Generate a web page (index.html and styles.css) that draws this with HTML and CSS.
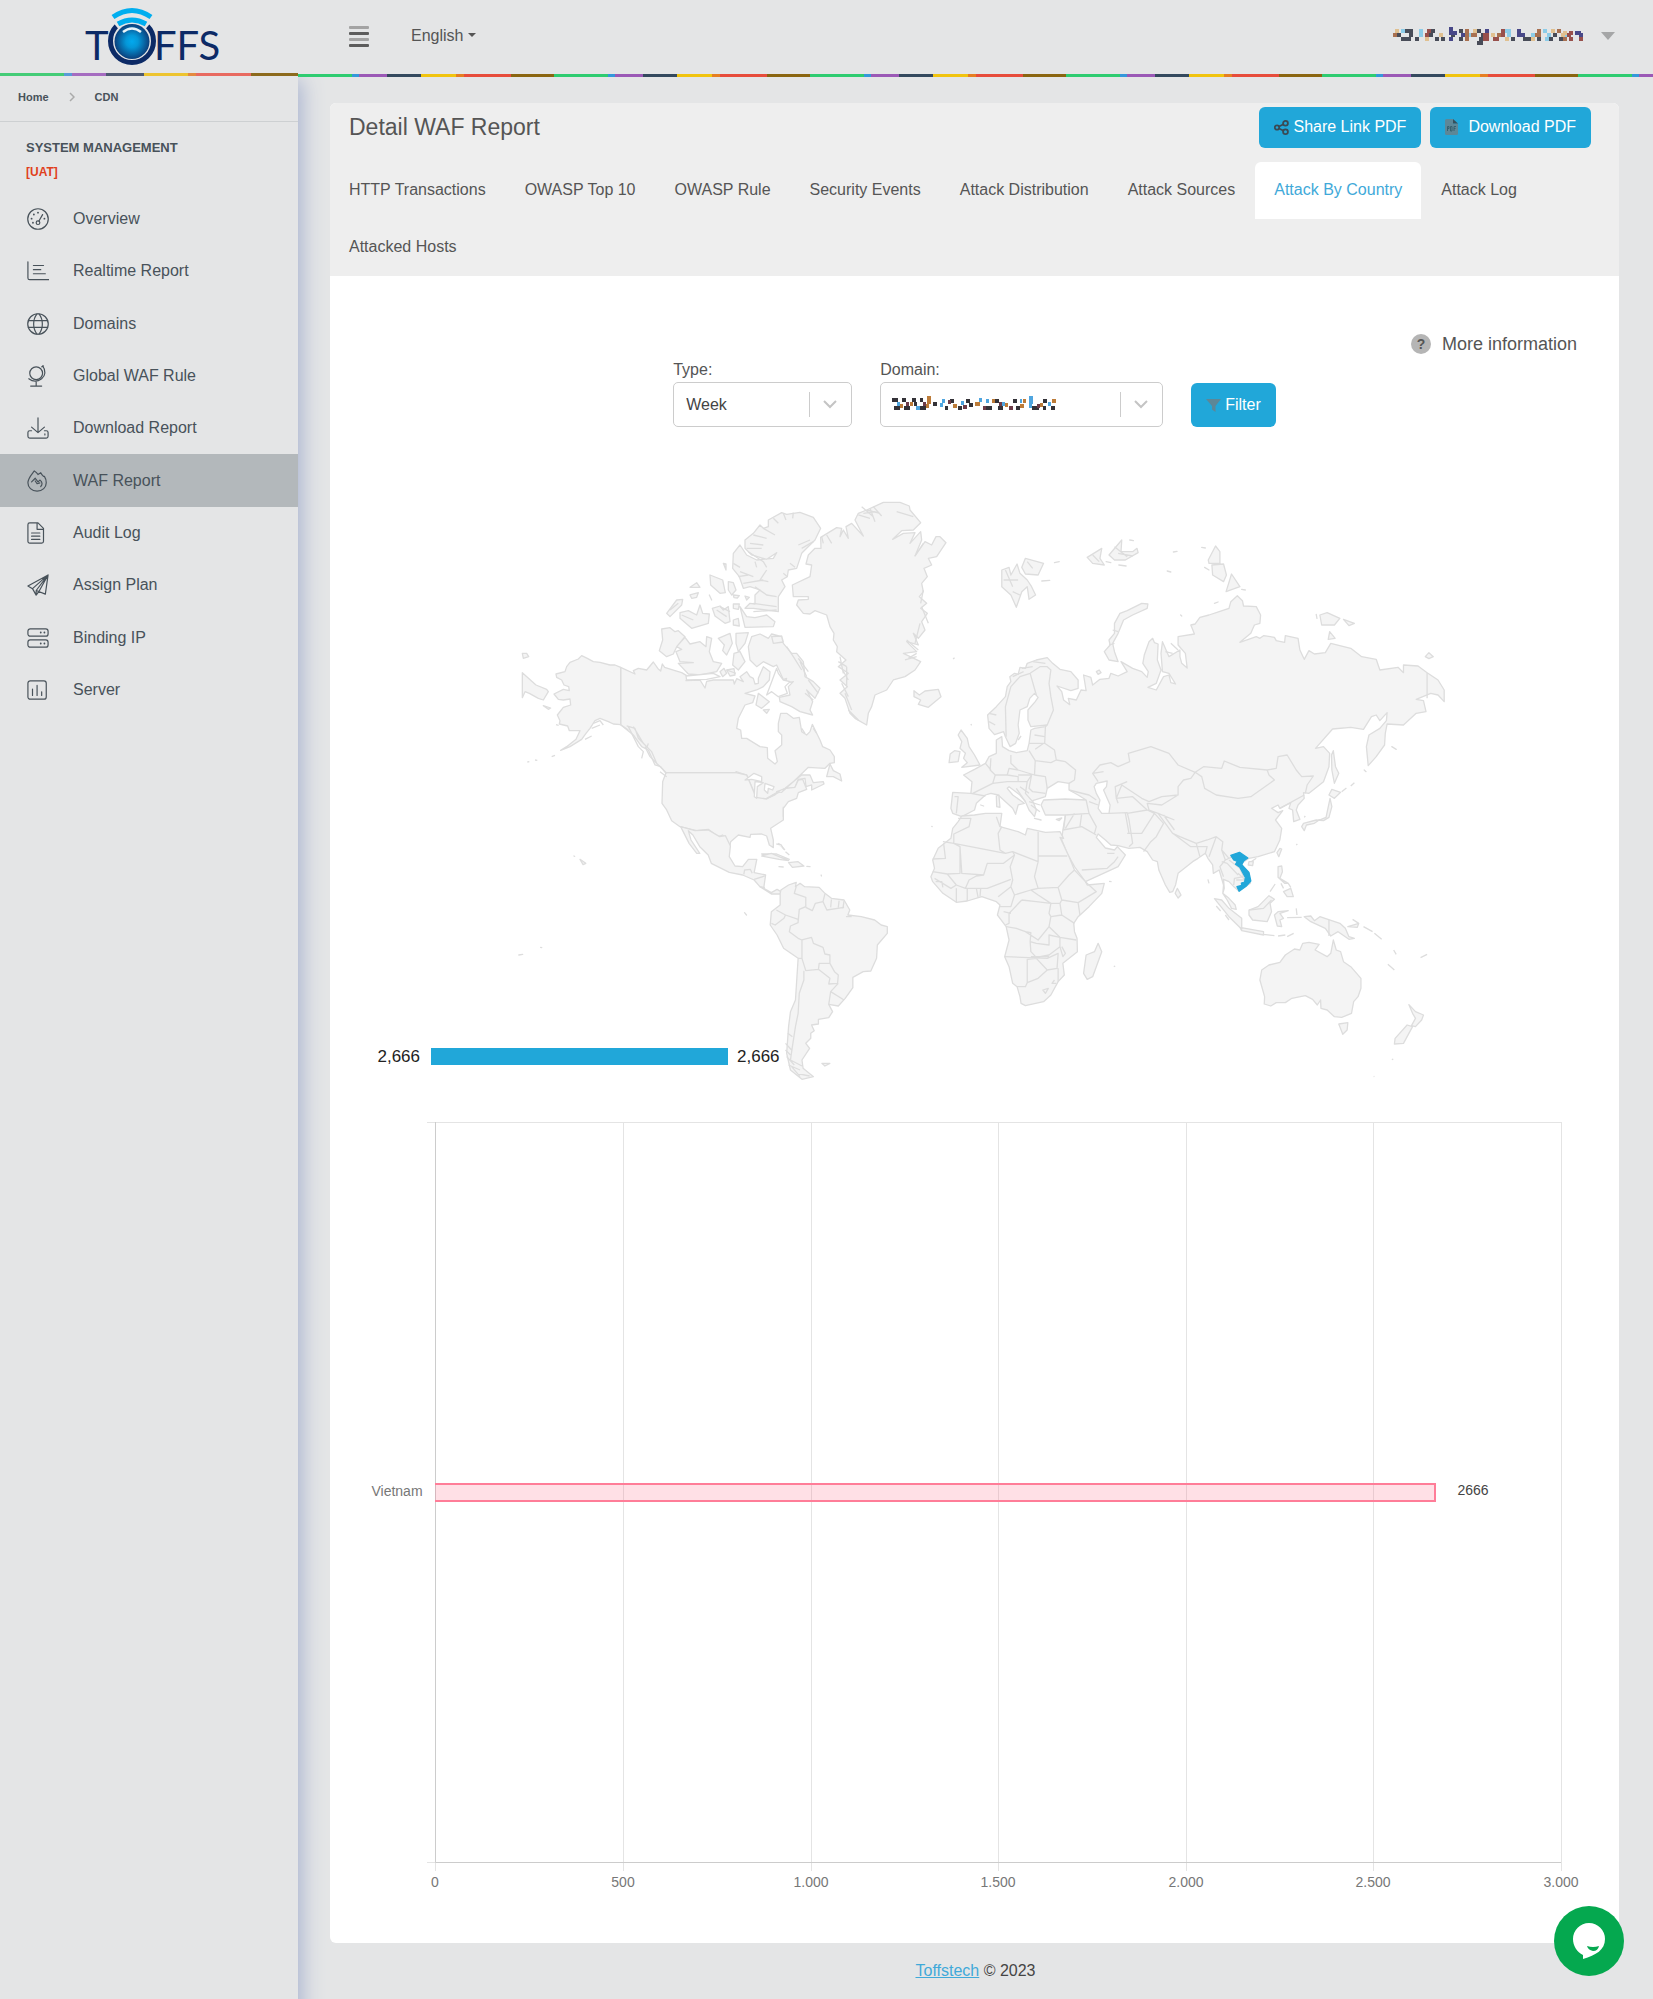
FILE: index.html
```html
<!DOCTYPE html>
<html lang="en">
<head>
<meta charset="utf-8">
<meta name="viewport" content="width=device-width, initial-scale=1">
<title>Detail WAF Report</title>
<link rel="stylesheet" href="styles.css">
</head>
<body>
<div class="layout">
  <aside class="sidebar">
    <a class="logo" href="#" aria-label="TOFFS home">
      <svg width="140" height="62" viewBox="82 4 140 62">
        <defs><radialGradient id="lens"><stop offset="0" stop-color="#02a9ee"/><stop offset=".35" stop-color="#0497d8"/><stop offset="1" stop-color="#0b3f7c"/></radialGradient></defs>
        <circle cx="132" cy="41" r="21.500" fill="none" stroke="#0c2a66" stroke-width="5"/>
        <path d="M116 26Q132 13 148 26" fill="none" stroke="#e4e5e6" stroke-width="8"/>
        <path d="M118 24Q132 16 146 24" fill="none" stroke="#00aeef" stroke-width="5"/>
        <path d="M113 17Q132 4 151 17" fill="none" stroke="#00aeef" stroke-width="5"/>
        <circle cx="132" cy="41.500" r="17.500" fill="url(#lens)"/>
        <path d="M123 32Q132 25 141 32" fill="none" stroke="#e8f4fa" stroke-width="2.500"/>
        <g class="logo-text"><text x="85" y="60">T</text><text x="154" y="60">FFS</text></g>
      </svg>
    </a>
    <div class="stripe stripe-side"></div>
    <nav class="crumbs" aria-label="Breadcrumb"><a href="#">Home</a><svg width="6" height="10" viewBox="0 0 6 10"><path d="M1 1l4 4-4 4" fill="none" stroke="#aaa" stroke-width="1.500"/></svg><a href="#">CDN</a></nav>
    <div class="side-title">SYSTEM MANAGEMENT</div>
    <div class="side-env">[UAT]</div>
    <nav class="menu">
      <a href="#"><svg viewBox="0 0 24 24"><circle cx="12" cy="12" r="11.200"/><circle cx="12" cy="16" r="2"/><path d="M13 14.200l4-7"/><path class="dots" d="M12 5v.1M7.500 7v.1M5 11.500v.1M19 11.500v.1M6.500 16v.1"/></svg>Overview</a>
      <a href="#"><svg viewBox="0 0 24 24"><path d="M1 2v17.500a2 2 0 0 0 2 2h21M7 6h11M7 10.500h8M7 15h13"/></svg>Realtime Report</a>
      <a href="#"><svg viewBox="0 0 24 24"><circle cx="12" cy="12" r="11.200"/><path d="M1.500 8.300h21M1.500 15.700h21M11 1c-5 6-5 16 0 22M13 1c5 6 5 16 0 22"/></svg>Domains</a>
      <a href="#"><svg viewBox="0 0 24 24"><circle cx="10" cy="9" r="7"/><path d="M17 1c4 5 3 11-1 14s-9 4-14 0M10 18v5M4 23h12M16 2l2-1"/></svg>Global WAF Rule</a>
      <a href="#"><svg viewBox="0 0 24 24"><path d="M12 1v16M5 11l7 6 7-6M5 15H3a2 2 0 0 0-2 2v4a2 2 0 0 0 2 2h18a2 2 0 0 0 2-2v-4a2 2 0 0 0-2-2h-2M19.500 18.500v1"/></svg>Download Report</a>
      <a class="active" href="#" aria-current="page"><svg viewBox="0 0 24 24"><path d="M8 1c2 1 3 2 4 4l3-2c1 2 2 3 3 4l1 0c2 3 2 5 2 7 0 5-4 9-10 9S1 19 1 14C1 9 5 5 8 1z"/><path d="M5 13l4-4 3 4 2-2c3 2 3 5 1 7M9 12l2 3 3-1"/></svg>WAF Report</a>
      <a href="#"><svg viewBox="0 0 24 24"><path d="M1 3a2 2 0 0 1 2-2h9l6 6v14a2 2 0 0 1-2 2H3a2 2 0 0 1-2-2zM11 1v7h7M5 12h9M5 15.500h9M5 19h9"/></svg>Audit Log</a>
      <a href="#"><svg viewBox="0 0 24 24"><path d="M23 1L1 13l5 3zM23 1L6 16l4 7 3-4zM23 1L10 18l10 4zM10 18v5"/></svg>Assign Plan</a>
      <a href="#"><svg viewBox="0 0 24 24"><rect x="1" y="2" width="22" height="8" rx="2.500"/><rect x="1" y="14" width="22" height="8" rx="2.500"/><path class="dots" d="M15 6v.1M19 6v.1M15 18v.1M19 18v.1"/></svg>Binding IP</a>
      <a href="#"><svg viewBox="0 0 24 24"><rect x="1" y="2" width="20" height="20" rx="2.500"/><path d="M6 11v7M11 7v11M16 14v4"/></svg>Server</a>
    </nav>
  </aside>

  <div class="page">
    <header class="topbar">
      <button class="burger" type="button" aria-label="Toggle menu"><i></i><i></i><i></i><i></i></button>
      <button class="lang" type="button">English<span class="caret"></span></button>
      <button class="user" type="button" aria-label="Account">
        <svg width="190" height="20" viewBox="0 0 190 20" fill="none" stroke-width="4">
          <path stroke="#484c58" d="M4 9h4M8 13h4M12 5h8M16 9h4M12 13h6M22 13h4M38 5h4M42 13h4M36 9h4M58 9h4M48 13h4M66 5h4M66 13h4M84 5h4M88 9h4M84 17h6M86 13h4M118 13h4M130 13h8M126 9h4M144 13h4M156 13h4M160 9h4M166 13h4"/>
          <path stroke="#8ccce8" d="M8 5h4M26 5h4M26 9h4M74 9h4M112 5h6M114 9h4M138 9h4M150 5h4M154 9h4M152 13h4M172 9h4"/>
          <path stroke="#a87050" d="M0 9h4M72 5h4M72 9h4M72 13h4M78 9h6M104 9h4M142 9h6M144 5h4M164 5h4M170 13h4"/>
          <path stroke="#484888" d="M56 3h4M56 7h8M56 13h4M68 9h4M92 5h4M124 5h4M124 9h8M186 9h4M182 7h6"/>
          <path stroke="#98504c" d="M32 9h4M34 5h4M90 9h6M90 13h6M100 13h6M108 5h4M108 9h4M174 9h4M176 13h4M176 7h4M186 13h4"/>
          <path stroke="#e0c090" d="M2 5h4M32 13h4M46 9h4M80 5h4M98 9h4M112 13h4M138 13h4M158 5h4M168 9h4M170 7h4"/>
        </svg>
        <span class="caret big"></span>
      </button>
    </header>
    <div class="stripe stripe-main"></div>

    <main class="card">
      <div class="card-head">
        <div class="title-row">
          <h1>Detail WAF Report</h1>
          <button class="btn" type="button"><svg width="15" height="15" viewBox="0 0 15 15" fill="none" stroke="#3a4a54" stroke-width="1.800"><circle cx="3" cy="7.500" r="2.200"/><circle cx="11.500" cy="3.300" r="2.400"/><circle cx="11.500" cy="11.700" r="2.400"/><path d="M5 6.500l4.500-2.200M5 8.500l4.500 2.200"/></svg>Share Link PDF</button>
          <button class="btn wide" type="button"><svg width="13" height="16" viewBox="0 0 13 16"><path d="M0 1.500A1.500 1.500 0 0 1 1.500 0H8v4.500h5v10a1.500 1.500 0 0 1-1.500 1.500h-10A1.500 1.500 0 0 1 0 14.500z" fill="#5d8797"/><path d="M8 0l5 4.500H8z" fill="#36505c"/><path d="M2.500 12V7.500H4V9.500H2.500M5.500 7.500v4.500H7V7.500zM9 12V7.500h2M9 9.500h1.500" fill="none" stroke="#36606f"/></svg>Download PDF</button>
        </div>
        <nav class="tabs">
          <a href="#">HTTP Transactions</a><a href="#">OWASP Top 10</a><a href="#">OWASP Rule</a><a href="#">Security Events</a><a href="#">Attack Distribution</a><a href="#">Attack Sources</a><a class="active" href="#" aria-current="page">Attack By Country</a><a href="#">Attack Log</a><a href="#">Attacked Hosts</a>
        </nav>
      </div>

      <a class="more" href="#"><span class="help">?</span>More information</a>

      <form class="filters">
        <div class="field type">
          <label for="type">Type:</label>
          <div class="pick"><select id="type"><option>Week</option></select><span class="sep"></span><svg width="14" height="9" viewBox="0 0 14 9"><path d="M1 1l6 6 6-6" fill="none" stroke="#c4c4c4" stroke-width="2"/></svg></div>
        </div>
        <div class="field domain">
          <label for="domain">Domain:</label>
          <div class="pick"><select id="domain"><option></option></select>
            <svg class="redacted" width="164" height="16" viewBox="0 0 164 16" fill="none" stroke-width="4">
              <path stroke="#343238" d="M0 4h6M2 12h6M10 4h4M12 12h6M20 4h4M22 8h3M28 4h3M28 12h6M41 8h4M53 12h3M58 5h4M66 12h4M74 5h4M77 9h4M94 12h6M103 5h4M106 12h5M121 5h4M124 12h4M140 12h7M151 12h3M151 5h4M159 12h4"/>
              <path stroke="#4fa5df" d="M5 8h3M24 12h4M48 9h3M50 5h3M69 7h3M87 4h3M94 5h3M110 8h3M128 5h2M137 2h4M137 6h4M137 10h3M156 8h3"/>
              <path stroke="#bc7b38" d="M8 10h3M18 8h3M35 2h4M35 6h4M34 10h3M61 10h4M83 8h5M100 5h3M113 9h3M128 10h4M131 5h3M148 9h3M160 5h4"/>
              <path stroke="#6d3b48" d="M14 8h3M31 8h3M56 6h3M71 11h4M91 12h3M107 8h3M117 12h4M145 10h3"/>
            </svg>
            <span class="sep"></span><svg width="14" height="9" viewBox="0 0 14 9"><path d="M1 1l6 6 6-6" fill="none" stroke="#c4c4c4" stroke-width="2"/></svg></div>
        </div>
        <button class="btn filter" type="button"><svg width="15" height="13" viewBox="0 0 15 13"><path d="M0 0h15L9.500 7v6L6 10.500V7z" fill="#5d8797"/></svg>Filter</button>
      </form>

      <svg class="map" viewBox="330 480 1289 620" role="img" aria-label="Attacks by country, world map">
        <g class="land" transform="translate(500 480) scale(.33333)">
          <path d="M362 562L345 555 330 555 300 547 280 545 262 535 245 527 235 537 210 547 200 560 195 575 168 582 170 592 185 600 192 615 206 620 208 632 190 628 162 642 175 658 190 660 210 657 212 675 190 682 172 705 180 722 178 732 203 738 208 752 240 752 228 778 200 800 182 811 210 800 245 778 258 760 270 745 285 722 300 715 325 725 340 732 362 734z"/>
          <path d="M362 562L405 582 400 572 415 565 440 570 460 546 474 566 482 573 487 552 494 562 525 572 545 578 565 590 558 602 600 600 615 624 620 604 640 600 700 600 703 612 710 596 730 605 720 590 740 575 750 590 760 595 765 612 775 610 775 595 790 560 810 575 808 600 790 620 770 630 735 640 765 648 758 668 735 675 715 715 710 745 722 750 725 775 740 775 780 800 802 803 803 835 825 852 832 845 825 812 845 795 845 765 835 755 835 730 842 700 860 700 880 715 898 712 905 755 920 765 930 755 937 733 950 760 960 780 968 800 990 810 1003 830 1003 848 990 850 975 865 925 862 880 905 858 925 885 922 895 898 915 895 918 920 935 915 935 930 972 912 970 905 940 908 930 885 905 885 855 925 800 957 770 955 740 885 708 875 V880H498L482 860 465 855 445 810 425 800 400 765 362 734z"/>
          <path d="M498 878L488 905 486 970 500 990 515 1022 540 1040 590 1052 625 1048 655 1070 668 1065 690 1098 692 1085 715 1065 750 1072 752 1063 785 1062 800 1068 808 1095 820 1103 820 1080 812 1045 850 1020 850 985 865 965 890 955 895 938 920 928 908 898 895 900 885 922 858 925 800 957 768 952 740 885 708 878z"/>
          <path d="M990 852L980 890 1000 890 1025 903 1020 882 1000 872zM485 447L510 443 525 455 535 452 555 470 530 500 520 522 500 530 478 512 488 480zM555 472L570 492 600 485 618 500 620 470 635 475 628 515 640 545 665 550 650 575 600 585 565 582 535 550 580 548 540 545 528 515 545 508 530 500zM655 475L690 460 697 490 680 525 668 512 673 495zM708 460L745 458 735 490 715 515 708 490zM702 520L720 515 735 545 715 570 698 555zM755 470L780 462 805 475 815 462 845 470 850 490 875 520 890 520 910 545 915 590 940 605 960 625 945 655 920 630 938 665 930 690 938 705 900 695 875 680 840 665 838 652 870 645 865 620 880 605 855 610 830 555 820 560 790 545 770 560 750 540 745 500zM775 640L808 665 785 685 768 675zM720 380L740 410 765 413 800 405 825 425 820 440 735 442zM735 180L760 160 780 135 790 145 805 140 805 120 845 98 860 103 900 97 940 112 962 145 945 180 905 220 890 265 865 270 862 290 845 300 855 320 835 350 835 395 760 385 735 385 750 370 765 372 765 345 780 330 750 320 730 325 718 290 698 265 700 220 720 195 740 225 770 240 820 235 830 218 800 238 755 225 735 205zM500 400L530 360 548 358 545 375 510 410zM540 398L565 392 590 405 600 375 608 400 628 402 625 430 575 445 540 415zM637 385L660 378 670 390 685 380 690 425 675 430 645 408zM630 285L668 300 676 338 660 340 632 315zM685 305L700 308 708 330 695 345 685 330zM570 322L590 308 600 322zM570 345L595 338 590 352 575 355zM700 372L718 372 715 388 700 385zM700 420L715 415 718 438 700 435zM670 250L678 252 678 270zM815 470L845 468 850 486 820 490zM845 600L860 595 855 608zM790 690L808 688 800 700zM735 348L748 352 740 360zM628 345L635 360zM700 345L718 347 712 354 702 353zM660 575L672 565 680 580 668 590zM680 570L702 566 705 585 690 588z"/>
          <path d="M962 172L1010 143 1025 145 1020 170 1030 150 1045 175 1038 140 1055 130 1090 168 1065 120 1075 100 1100 90 1150 67 1200 67 1228 78 1230 90 1262 128 1240 150 1205 152 1178 178 1210 160 1245 158 1230 190 1262 155 1265 180 1245 228 1275 185 1295 195 1308 170 1320 170 1338 188 1310 230 1285 235 1295 255 1272 265 1282 290 1265 310 1270 335 1258 350 1280 370 1262 385 1282 400 1265 425 1275 450 1255 475 1240 460 1255 495 1220 485 1250 515 1210 520 1262 545 1245 570 1215 590 1180 600 1160 630 1125 645 1115 680 1105 700 1100 735 1065 715 1050 700 1035 655 1020 640 1042 620 1020 600 1045 580 1015 560 1038 540 1010 515 1012 500 1000 480 1002 460 990 440 980 405 945 392 930 402 910 400 890 375 895 360 925 358 925 350 880 350 877 315 930 290 935 255 918 252 925 225 945 205 963 205zM1242 632L1258 645 1275 633 1315 628 1323 650 1285 682 1255 673 1262 660 1242 650zM67 578L108 615 140 628 145 635 130 660 115 655 88 640 75 635 67 653zM67 520L80 520 86 530 70 535zM130 677L152 684 145 688zM785 1122L830 1122 868 1138 830 1132z"/>
          <path class="line" d="M362 562V734M498 878H708M362 734L385 750M385 740L400 770 415 800 430 815 425 835M380 738L405 745 415 775 435 795M400 740L430 790 455 815 470 850M435 800L450 830 485 865 500 880M480 875L500 890M445 790L440 805M275 745L300 735M280 730L300 722 310 735M255 778L275 768M155 830L165 826M82 846L88 845M105 840L112 841M168 734L176 736M745 215L790 245 800 262M765 245L770 262M790 145L825 165M740 205L785 205M750 190L790 195M760 165L800 175M820 115L835 130M850 100L858 120M880 98L878 115M905 205L940 185M895 195L930 180M870 250L885 262M850 280L862 290M965 170L970 190M980 165L995 190M1085 80L1120 110M1090 100L1130 95M1100 90L1140 100M1110 85L1125 125M1075 105L1110 115M1120 80L1145 108M1245 228L1270 190M700 250L720 262M715 290L745 285M720 275L760 290M730 310L790 300M800 270L780 300 805 305M765 320L800 345 830 350M760 370L830 380M760 395L830 390M545 405L580 420M510 390L535 370M650 390L680 410M660 380L690 395M680 570L708 580M590 600L610 585M905 745L915 760M950 760L940 745M860 500L880 530M880 530L905 570M895 535L925 575M900 545L920 590M925 600L955 640M915 640L940 660M1040 560V620M1020 530L1030 580M1015 545L1040 560M1028 570L1045 600M1025 610L1045 650M1035 640L1055 690M1045 690L1075 720M1270 330L1262 370M1265 380L1285 430M1260 430L1245 490M1220 480L1255 510M1215 540L1250 530M1240 110L1190 95M1225 535L1250 520M850 980V1010M835 1090L855 1110"/>
          <path class="sea" d="M735 900L762 880 785 890 785 905 755 898zM765 905L790 908 772 920 770 955 763 950zM795 910L822 920 818 930 805 925 803 940 793 930zM800 955L830 938 825 945zM830 935L858 925 845 937zM558 588L640 580 660 590 620 598 560 600zM830 565L835 580 850 600 870 605 855 620 862 640 835 650 815 635 800 645 815 605z"/>
        </g>
        <g class="land" transform="translate(360 820) scale(.38265 .33333)">
          <path d="M838 20L875 32 910 30 940 50 955 47 968 78 965 110 980 138 1000 140 1015 118 1037 118 1030 158 1060 165 1055 205 1075 218 1090 208 1100 215 1098 222 1075 222 1045 200 1030 180 1000 165 965 157 918 130 910 105 888 80 870 45 858 32 865 60 888 100 880 100 860 70z"/>
          <path d="M1100 210L1120 195 1140 187 1138 200 1150 190 1162 200 1200 202 1215 220 1232 235 1265 240 1280 270 1275 285 1310 290 1345 300 1362 315 1378 320 1378 340 1352 375 1350 415 1335 453 1315 455 1288 472 1288 503 1268 535 1250 558 1225 553 1235 575 1225 593 1198 598 1198 612 1180 615 1187 632 1178 640 1178 655 1165 670 1175 685 1155 720 1158 745 1185 770 1155 778 1125 750 1115 700 1120 620 1125 575 1138 540 1145 415 1107 385 1090 345 1072 315 1075 275 1098 255 1098 220z"/>
          <path d="M1050 108L1075 100 1120 122 1095 118zM1120 128L1145 125 1160 138 1130 142zM1095 140L1106 141zM1168 139L1176 140zM575 118L590 130 583 134zM1005 278L1010 285zM415 405L425 403zM472 382L475 383zM559 108L561 109zM1207 730L1228 730 1215 738zM1205 165L1206 168zM1088 72L1100 74 1108 88M1112 95L1122 105"/>
          <path class="line" d="M1140 200L1135 220 1165 232 1165 260 1148 268 1145 305M1165 262L1182 272 1190 250 1210 245 1215 222M1210 245L1220 270 1265 262M1232 238L1230 262M1252 242L1250 262M1265 243L1262 265M1088 270L1112 285 1108 295 1085 315 1075 310M1112 285L1145 298 1145 308 1125 318 1122 335 1145 355 1155 360 1155 415 1145 415M1155 360L1180 352 1185 370 1210 382 1215 402 1228 405 1228 430 1200 430 1198 448 1165 452 1155 415M1198 448L1228 475 1225 492 1248 490 1250 465 1240 455 1228 430M1160 452L1160 480 1148 520 1145 580 1138 620 1130 680 1125 720 1155 738M1250 490L1230 515 1265 540M1230 515L1225 553M1270 290L1285 290M1118 640L1130 650M1112 670L1128 690M1112 690L1125 705M1115 710L1135 735M1120 735L1150 750M1128 740L1150 770M1140 760L1175 768M1003 163L1005 150 1020 148 1025 160M1030 178L1058 168M1045 200L1058 203"/>
        </g>
        <g class="land" transform="translate(900 480) scale(.36352 .33333)">
          <path d="M285 755L260 764 245 745 241 705 265 680 290 650 295 620 305 605 302 590 315 580 325 583 330 562 345 565 350 550 375 540 405 533 420 550 440 568 470 575 490 600 490 625 470 632 432 618 445 635 450 660 467 674 463 655 485 660 498 630 512 632 505 585 525 592 530 615 550 598 575 595 580 580 600 588 625 575 608 545 640 565 665 575 680 592 683 575 668 550 672 525 685 485 695 475 700 488 710 492 708 540 718 570 705 610 682 622 705 630 725 590 740 585 745 608 758 612 740 580 722 575 718 520 722 485 740 530 770 510 770 530 775 550 790 564 785 520 765 495 765 470 810 462 800 435 812 432 825 412 850 405 878 395 905 385 910 365 928 347 942 362 945 378 980 380 992 405 990 430 975 435 965 460 935 487 980 470 990 475 1000 467 1030 472 1035 482 1058 487 1060 467 1095 475 1100 510 1112 538 1125 512 1140 522 1170 518 1185 490 1240 505 1270 530 1310 538 1320 570 1370 562 1385 578 1385 555 1425 558 1450 578 1480 600 1497 630 1497 665 1480 645 1460 640 1420 658 1440 662 1447 695 1420 700 1385 735 1340 732 1335 760 1333 795 1310 830 1288 857 1283 800 1290 765 1320 745 1338 722 1340 698 1320 722 1310 705 1297 710 1275 748 1240 742 1190 747 1143 805 1165 800 1182 820 1180 860 1165 905 1125 940 1110 938 1112 955 1095 975 1090 990 1100 1018 1083 1025 1080 990 1070 985 1075 968 1045 985 1040 975 1022 985 1040 998 1053 992 1033 1020 1050 1045 1045 1080 1030 1115 985 1130 960 1135 940 1150 945 1165 962 1195 964 1210 932 1233 920 1222 905 1205 890 1198 892 1225 888 1240 905 1255 922 1275 925 1288 912 1285 900 1260 888 1240 890 1215 878 1170 862 1180 860 1155 847 1135 840 1120 820 1135 805 1145 765 1180 758 1215 750 1235 742 1237 730 1215 712 1170 708 1145 695 1140 680 1115 660 1102 630 1105 600 1097 580 1095 565 1080 545 1062 540 1072 565 1104 590 1110 598 1100 620 1125 600 1160 570 1175 510 1205 500 1190 480 1160 460 1120 445 1080 448 1050 455 1005 400 1005 388 975 395 960 455 957 512 960 490 945 465 930 465 910 435 905 405 925 400 950 365 962 375 990 370 1010 355 990 345 965 330 945 300 920 295 925 310 945 342 970 325 975 318 1003 310 985 270 945 250 940 235 945 210 970 205 990 170 1010 145 1000 140 985 145 937 195 940 198 905 175 885 205 868 235 850 245 830 265 820 265 780 280 770 282 800 300 812 320 818 350 812 355 790 360 750 370 745 400 740 405 735 360 740 352 720 352 690 372 665 380 652 370 640 357 655 350 680 330 690 325 735 328 760 318 790 303 800 290 770z"/>
          <path d="M170 862L220 855 205 825 190 800 185 775 168 750 160 765 170 785 165 805 180 820 175 835 185 848zM135 848L160 845 165 815 150 812 138 822zM1192 812L1198 860 1207 880 1195 910 1188 870 1187 825zM1188 928L1212 937 1195 955 1180 945zM1183 955L1188 980 1180 1012 1165 1022 1145 1020 1110 1030 1105 1040 1112 1052 1118 1035 1140 1030 1150 1022 1172 1012zM1045 1105L1050 1107 1042 1130 1037 1118zM600 545L575 540 562 515 578 495 575 480 590 460 590 430 605 400 625 392 665 370 682 372 680 385 640 405 615 420 600 460 585 490 590 515zM320 382L305 345 280 320 280 270 300 262 305 285 322 252 330 280 350 300 362 320 373 345 355 358 350 320 335 335zM335 262L345 235 395 250 380 285 345 282zM515 232L555 205 550 235 562 255 530 250zM575 225L610 180 608 215 640 215 652 205 655 218 620 240 590 240zM848 240L868 198 880 215 880 250 850 250zM858 255L890 252 898 285 890 305 860 285zM897 335L912 282 935 320zM1155 405L1175 398 1210 415 1195 435 1160 435zM1220 418L1250 430 1235 437zM1182 455L1197 475 1178 478zM1445 530L1455 518 1467 530 1455 536zM540 575L548 570 553 578 545 583zM425 248L438 245zM390 303L412 301zM735 273L745 276zM752 216L762 214zM830 202L840 204zM1145 403L1147 415zM265 948L272 945 275 982 266 980zM222 975L230 978zM370 1015L388 1020zM430 1018L445 1014 438 1022zM1353 800L1365 808zM1277 870L1282 875zM567 245L580 248zM602 255L622 258zM632 180L642 182zM838 262L850 270zM940 328L950 330zM865 370L875 366zM772 405L775 408zM1215 935L1228 924M1240 918L1250 908M325 780L333 768M195 732L197 736M150 533L146 537"/>
          <path class="sea" d="M540 910L570 903 568 920 560 930 568 950 578 975 575 1000 555 1000 545 985 550 960 540 940 534 920z"/>
          <path class="line" d="M292 770L290 680 305 620 330 590 358 580 375 645M358 580L385 560 405 560 415 570 410 610 415 650 422 690 405 735M400 740L398 790 425 810 430 840 455 845 483 870 480 900 465 910M355 790L398 790M370 765L398 770M355 812L372 842 415 848 430 840M372 808L395 790M372 842L370 885 325 870 305 850 305 825M370 885L400 890 405 925M250 835L248 870 262 885 255 910 200 940M262 885L295 885 300 865 325 870M235 850L250 870M295 885L325 890 325 905 295 905M325 885L362 885 350 905 325 905M255 910L295 905M362 885L355 925 365 935 400 940M350 905L345 940 365 965M330 920L355 940M320 925L345 965M150 950L160 950 155 1000M195 940L235 948M465 930L520 945 540 960M512 960L520 1000 455 1005M520 965L545 975M520 1000L540 1040 535 1060M575 1000L625 998 630 1020 640 1090 630 1100M625 1000L680 990 640 950 595 955 592 920 625 905M560 875L530 880 545 905M530 880L550 855 580 848 600 860 632 845 628 820 690 800 740 820 765 855 812 877 835 860 885 865 892 843 935 862 1010 870 1015 885 1030 900 965 950 930 955 870 945 838 925 830 890 812 877M812 877L800 895 780 900 765 920 765 945 720 950 685 965 665 955 610 915 595 955M765 945L720 975 680 970 685 990 710 1000 750 1060 770 1070 815 1090 845 1080 870 1070 888 1085 885 1110 905 1135M625 1060L665 1060 700 1000 680 990M700 1000L725 1030 705 1070 690 1085 670 1115M750 1060L800 1100 845 1100 840 1120M815 1090L825 1130M870 1070L850 1130M885 1110L895 1140 880 1160 890 1190M895 1140L915 1130M905 1140L935 1165 945 1190 920 1195 918 1215M1010 870L1035 865 1040 830 1065 825 1090 870 1105 890 1137 888 1120 915 1115 940M1045 985L1112 945M1450 578V655M448 1050L500 1040 540 1065M455 1005L450 1050M480 1000L455 1045M500 1000L495 1040M500 1170L570 1165 590 1145 600 1130M570 1120L590 1120M620 1000L630 1060M710 1000L755 1020M725 1005L755 1050M600 970L595 955M980 1135L960 1150M290 270L310 320M285 300L325 300M310 335L330 345M530 225L548 245M590 200L625 230M600 220L640 228M350 245L365 265M310 590L340 575M335 565L365 560M365 545L400 550M245 700L265 705M245 725L262 735M585 450L600 455M575 495L590 490M360 975L385 995M355 965L385 975M745 490L765 510M730 515L750 520"/>
        </g>
        <g class="land" transform="translate(900 800) scale(.36352 .33333)">
          <path d="M170 48L205 45 235 40 280 40 275 80 325 95 345 105 350 85 400 97 440 95 450 115 440 112 465 170 480 210 510 245 515 255 562 250 555 280 520 320 490 350 478 370 480 395 487 415 488 455 448 490 452 525 435 545 415 585 395 605 345 617 333 610 330 590 322 560 310 550 300 500 288 470 300 420 292 380 268 345 275 315 265 305 225 290 185 303 155 307 118 280 90 245 85 230 95 205 90 180 105 145 140 115 145 85 160 65z"/>
          <path d="M545 430L555 455 530 530 515 538 505 520 512 465 535 455zM763 265L773 285 765 294 757 280zM865 296L885 300 905 325 940 355 940 388 905 350zM935 382L1000 395 1000 405 940 392zM960 330L985 320 1015 287 1030 298 1018 310 1022 335 1010 365 970 360 960 345zM1030 345L1040 335 1068 332 1045 340 1055 355 1045 360 1050 380 1038 378zM1040 200L1050 198 1052 215 1045 235 1068 250 1058 250 1040 232zM1055 275L1075 265 1082 290 1065 290zM1112 350L1130 348 1140 362 1155 350 1210 370 1225 385 1235 410 1250 415 1235 418 1205 395 1185 408 1170 385 1130 365zM1232 380L1262 370 1258 382zM960 185L972 185 970 197 958 195zM1192 420L1200 450 1212 455 1220 485 1240 500 1252 515 1268 535 1268 565 1260 590 1248 605 1242 640 1215 652 1195 650 1175 630 1158 625 1157 600 1148 615 1135 598 1115 587 1078 595 1060 608 1035 608 1020 618 1002 612 1003 590 990 540 995 510 1015 495 1045 487 1060 465 1085 447 1100 450 1108 430 1125 427 1153 433 1142 450 1175 470 1185 460zM1207 672L1232 668 1230 690 1218 703zM1400 614L1418 635 1440 645 1435 660 1418 680 1407 677 1418 655 1410 640zM1395 675L1410 680 1385 730 1360 732 1362 715zM870 318L882 333M895 345L905 360M1000 403L1030 407M1040 408L1060 405M1065 410L1083 400M1090 325L1092 345M1065 353L1105 352M1245 358L1262 370M1275 380L1300 395M1305 400L1325 418M1358 450L1365 463M1342 493L1360 510M1432 473L1450 463M847 238L850 250M1018 275L1032 252M1048 250L1055 265M1068 250L1075 262M588 498L592 500M575 244L582 245M1353 779L1357 777M1303 829L1305 830M1090 135L1093 132M1112 52L1115 48M86 79L90 80"/>
          <path class="line" d="M160 55H195L190 80 148 102 148 130 290 160 310 155 315 165 285 190 240 190 230 225 170 220 165 140 148 130 118 125M280 80L270 100 275 150 290 160M265 50L275 80M380 95V168H460M380 168V185L310 155M380 185L370 230 380 265 360 270 315 285 305 260 310 240 303 200 315 165M165 140L165 220 130 222 90 215M120 130L125 175 90 177M95 235L140 265 155 255 180 265 210 265 240 265 305 238M180 265L190 240 210 228 230 225M155 265V307M185 265V303M210 265L215 293M222 265L220 290M130 222L155 255M380 265L435 262 465 225 480 210M435 262L445 300 490 308 540 275 510 245M445 300L440 310 415 310 380 285 360 270M440 310L445 345 415 350 410 340 415 310M490 308L495 345M445 345L480 370M415 350L410 380 440 412 485 420M410 380L380 420 345 395 320 385 292 380M345 395L360 398 358 425 375 430 410 435 410 405 440 412 440 440 410 465 375 472 360 455 358 425M288 470L405 475 435 460 432 505 405 510 380 535 350 548 345 560 322 560M350 478L350 548M350 478L375 475 405 510M360 470L410 470M440 440L448 470 455 460 445 440M435 505L435 545M305 260L270 290M315 285L305 320 275 320M335 300L300 340 300 370 290 375M335 300L375 305 415 310M285 335L305 340M425 540L418 550 430 550M393 570L408 565 400 580zM98 245H115L118 262M1180 360V408M960 330L1000 325 1022 300M930 220L950 240 925 240M885 185L900 190 930 225"/>
          <path class="hit" d="M910 166L934 157 957 174 946 182 940 194 960 217 965 243 952 259 933 274 927 260 940 256 939 249 948 246 950 232 935 202 923 193 928 184 918 180z"/>
        </g>
        <rect x="431" y="1048" width="297" height="17" fill="#21a7d9"/>
        <text class="scale" x="420" y="1062" text-anchor="end">2,666</text>
        <text class="scale" x="737" y="1062">2,666</text>
      </svg>

      <svg class="chart" viewBox="330 1112 1289 782" role="img" aria-label="Vietnam: 2666 attacks">
        <path class="grid" d="M427 1122.500H1561.500M623.500 1122V1871M811.500 1122V1871M998.500 1122V1871M1186.500 1122V1871M1373.500 1122V1871M1561.500 1122V1871M427 1862.500H435M435.500 1862V1871"/>
        <path class="axis" d="M435.500 1122V1862.500H1561"/>
        <rect x="435" y="1483" width="1001" height="18" fill="#ff6384" fill-opacity=".2"/>
        <path d="M435 1484H1435V1501H435" fill="none" stroke="#ff7d98" stroke-width="2"/>
        <g class="ticks"><text x="435" y="1887">0</text><text x="623" y="1887">500</text><text x="811" y="1887">1.000</text><text x="998" y="1887">1.500</text><text x="1186" y="1887">2.000</text><text x="1373" y="1887">2.500</text><text x="1561" y="1887">3.000</text><text x="397" y="1496">Vietnam</text><text class="value" x="1473" y="1495">2666</text></g>
      </svg>
    </main>
    <footer><a href="#">Toffstech</a> © 2023</footer>
  </div>
</div>
<button class="chat" type="button" aria-label="Open chat"><svg width="34" height="38" viewBox="0 0 34 38"><path d="M17 1a16 16 0 0 1 16 16c0 11-9 16-22 20v-4C5 30 1 24 1 17A16 16 0 0 1 17 1z" fill="#fff"/><path d="M15 24q6 2 12 0-1 5-6 5-5-1-6-5z" fill="#05a84f"/></svg></button>
</body>
</html>
```

FILE: styles.css
```css
* { box-sizing: border-box; }

body {
  margin: 0;
  background: #e4e5e6;
  color: #555;
  font: 16px/24px "Liberation Sans", Arial, sans-serif;
}

a { color: inherit; text-decoration: none; }
button { border: 0; background: none; color: inherit; font: inherit; padding: 0; cursor: pointer; }

.layout { display: flex; min-height: 100vh; }

.sidebar {
  flex: 0 0 298px;
  color: #48525a;
  box-shadow: 4px 80px 20px #a9b4d0;
  clip-path: inset(0 -30px 0 0);
  background: #e4e5e6;
}
.logo { display: flex; height: 73px; padding: 4px 0 0 82px; }
.logo svg { overflow: visible; }
.logo-text { fill: #0c2a66; font: 40px Lato, sans-serif; }

.stripe { height: 3px; }
.stripe-side {
  background: linear-gradient(90deg, #4c7 0 64px, #5a9bd8 0 72px, #a56cc0 0 106px, #4d5a72 0 144px, #edc430 0 188px, #e48a40 0 196px, #e86a60 0 251px, #8c6a1c 0);
}
.stripe-main {
  background: repeating-linear-gradient(90deg, #2ecc71 0 54px, #3498db 0 61px, #9b59b6 0 89px, #34495e 0 123px, #f1c40f 0 158px, #e67e22 0 166px, #e74c3c 0 213px, #8a6510 0 256px);
}

.crumbs {
  display: flex;
  align-items: center;
  gap: 20px;
  height: 46px;
  padding: 0 18px 3px;
  border-bottom: 1px solid #cdd0d2;
  font-size: 11px;
  font-weight: bold;
}
.side-title { padding: 14px 26px 0; font-size: 13px; font-weight: bold; }
.side-env { padding: 0 26px; font-size: 12px; font-weight: bold; color: #e0401c; }

.menu { display: grid; grid-auto-rows: 1fr; min-height: 523px; margin-top: 9px; }
.menu a { display: flex; align-items: center; padding-left: 27px; gap: 24px; }
.menu a.active { background: #b3b8bb; }
.menu svg { width: 22px; height: 22px; fill: none; stroke: #48525a; stroke-width: 1.3; stroke-linejoin: round; stroke-linecap: round; }
.menu .dots { stroke-width: 2; }

.page { flex: 1; min-width: 0; display: flex; flex-direction: column; }
.topbar { display: flex; align-items: center; height: 74px; padding: 0 38px 2px 51px; background: #e4e5e6; position: relative; }
.stripe-main { position: relative; }
.burger { display: grid; gap: 3px; width: 20px; margin-right: 42px; }
.burger i { height: 3px; border-radius: 1px; background: #a3a3a3; }
.burger i:nth-child(even) { background: #5c5c5c; }
.caret { display: inline-block; margin-left: 5px; border: 4px solid transparent; border-top-color: #555; border-bottom: 0; vertical-align: 4px; }
.caret.big { border-width: 8px 7px 0; border-top-color: #a5a6a7; margin: 0; }
.user { display: flex; align-items: center; gap: 18px; margin-left: auto; }

.card { margin: 26px 34px 0 32px; background: #fff; border-radius: 6px; overflow: hidden; padding-bottom: 49px; }
.card-head { background: #eee; }
.title-row { display: flex; align-items: center; gap: 9px; height: 59px; padding: 0 28px 11px 19px; }
h1 { margin: 0 auto 0 0; font-size: 23px; font-weight: normal; }
.btn {
  display: flex;
  align-items: center;
  gap: 4px;
  height: 41px;
  padding: 0 15px;
  border-radius: 6px;
  background: #21a7d9;
  color: #fff;
}
.btn.wide { gap: 10px; }

.tabs { display: flex; flex-wrap: wrap; column-gap: 1px; }
.tabs a { height: 57px; padding: 16px 19px; }
.tabs a.active { background: #fff; color: #3fa9d9; border-radius: 6px 6px 0 0; }

.more { display: flex; align-items: center; justify-content: flex-end; gap: 11px; padding: 56px 42px 0 0; font-size: 18px; }
.help { width: 20px; height: 20px; border-radius: 50%; background: #b5b5b5; color: #555; font-size: 14px; line-height: 20px; font-weight: bold; text-align: center; }

.filters { display: flex; justify-content: center; align-items: flex-end; gap: 28px; padding-top: 2px; }
.type { width: 179px; }
.domain { width: 283px; }
.field label { display: block; }
.pick { position: relative; display: flex; align-items: center; height: 45px; padding-right: 14px; border: 1px solid #ccc; border-radius: 5px; }
.pick select { appearance: none; flex: 1; min-width: 0; height: 41px; border: 0; padding: 0 12px; background: none; font: inherit; color: #444; }
.sep { width: 1px; height: 25px; margin-right: 13px; background: #ccc; }
.redacted { position: absolute; left: 11px; top: 13px; }
.filter { height: 44px; }

.map { display: block; width: 100%; margin-top: 53px; }
.land path { fill: #f4f4f4; stroke: #ddd; stroke-width: 1.3; stroke-linejoin: round; vector-effect: non-scaling-stroke; }
.land .line { fill: none; }
.land .sea { fill: #fff; }
.land .hit { fill: #21a7d9; stroke: #21a7d9; }
.scale { font-size: 17px; fill: #222; }

.chart { display: block; width: 100%; margin-top: 12px; }
.grid { fill: none; stroke: #e4e4e4; }
.axis { fill: none; stroke: #ccc; }
.ticks { font-size: 14px; fill: #777; text-anchor: middle; }
.ticks .value { fill: #444; }

footer { padding: 16px 0; text-align: center; color: #444; }
footer a { color: #3fa9d9; text-decoration: underline; }

.chat { position: fixed; right: 29px; bottom: 23px; display: grid; place-items: center; width: 70px; height: 70px; border-radius: 50%; background: #05a84f; }
```
